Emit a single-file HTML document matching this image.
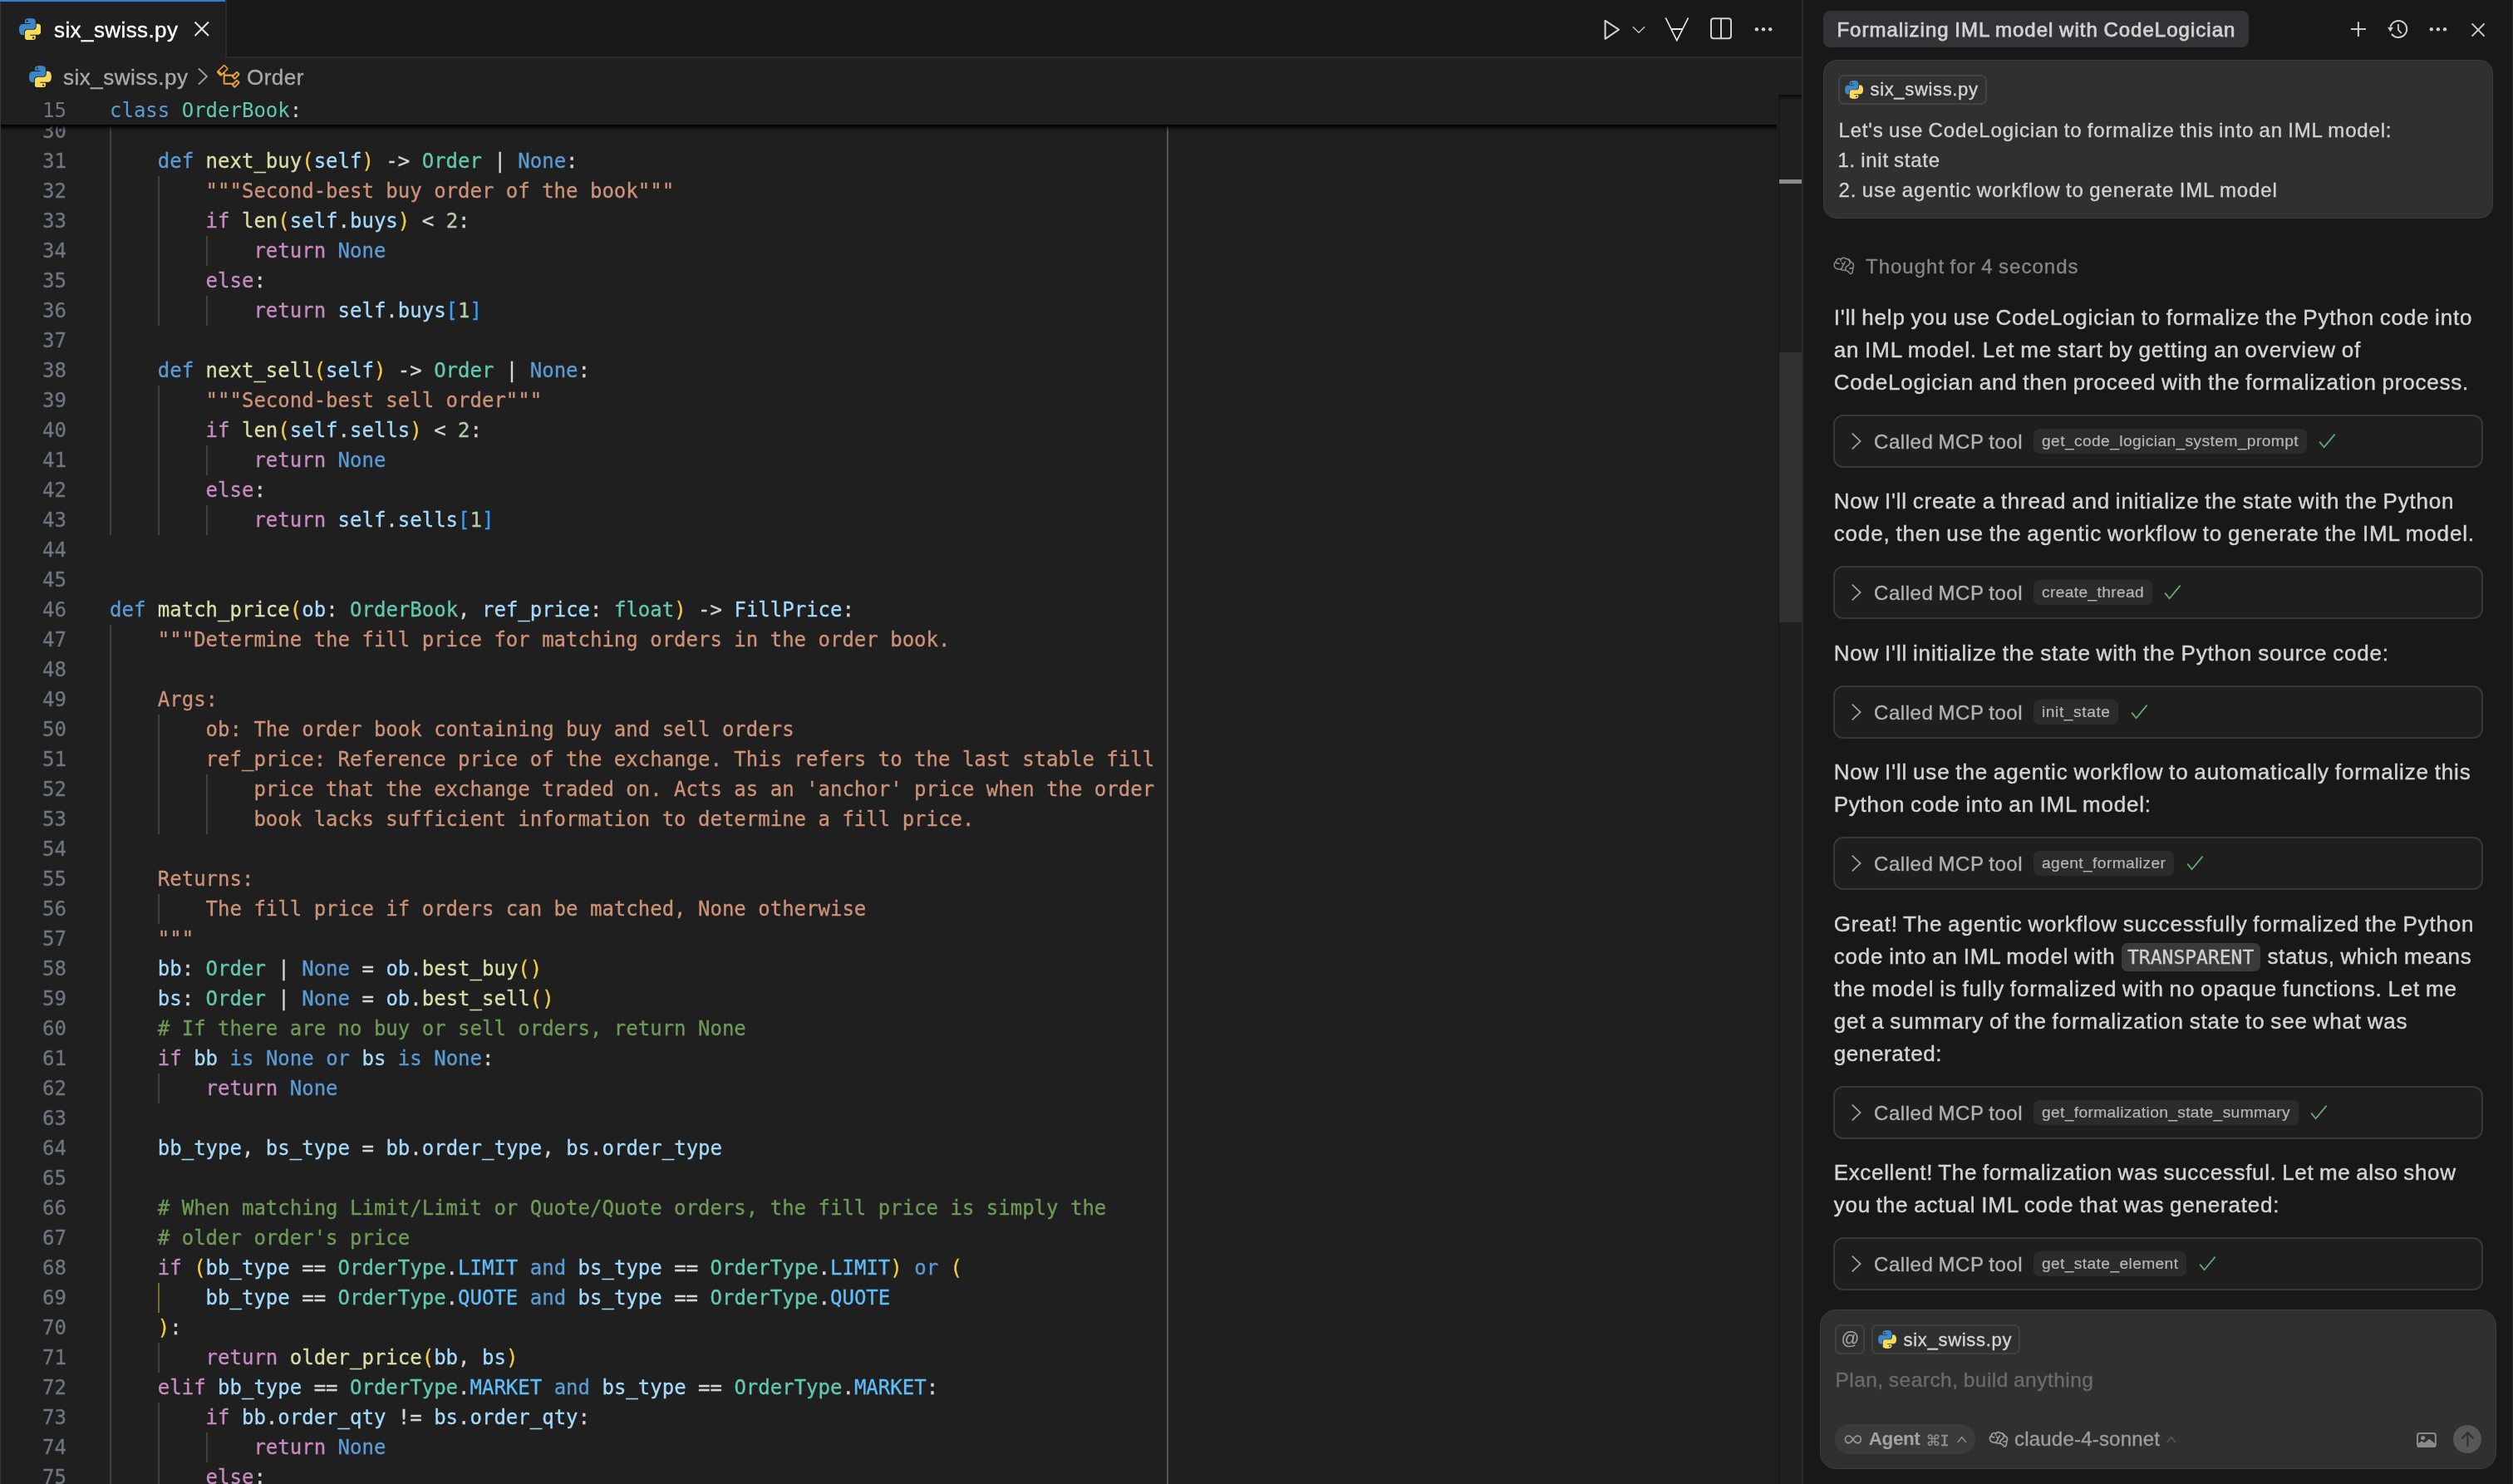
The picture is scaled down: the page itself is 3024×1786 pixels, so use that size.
<!DOCTYPE html><html><head><meta charset="utf-8"><title>six_swiss.py</title><style>
*{box-sizing:border-box;margin:0;padding:0}
html{background:#1f1f1f}
body{width:3024px;height:1786px;overflow:hidden;background:#1f1f1f;position:relative;font-family:'Liberation Sans',sans-serif;color:#ccc;-webkit-font-smoothing:antialiased}
.abs,.py,svg.ic{position:absolute}
.t{position:absolute;white-space:pre;line-height:1;-webkit-text-stroke:0.35px}
#root{position:absolute;left:0;top:0;width:3024px;height:1786px;will-change:transform;transform:translateZ(0)}
#tabbar{position:absolute;left:0;top:0;width:2168px;height:70px;background:#181818;border-bottom:2px solid #2b2b2b}
#tab{position:absolute;left:0;top:0;width:273px;height:70px;background:#1f1f1f;border-right:2px solid #2b2b2b}
#tabtop{position:absolute;left:0;top:0;width:271px;height:2px;background:#3579cd}
#leftedge{position:absolute;left:0;top:2px;width:1px;height:1784px;background:#363636;z-index:6}
#editor{position:absolute;left:0;top:114px;width:2140px;height:1672px;overflow:hidden;font-family:'DejaVu Sans Mono','Liberation Mono',monospace;font-size:24px;line-height:36px;color:#d4d4d4;-webkit-text-stroke:0.3px}
.ln{position:absolute;left:0;width:2140px;height:36px;white-space:pre}
.ln .no{position:absolute;left:0;width:80px;text-align:right;color:#6e7681}
.ln .cd{position:absolute;left:132px;top:0.6px}
.ln .no{top:0.6px}
.g{position:absolute;top:1px;width:2px;height:36px;background:#404040}
.ga{background:#7c692c}
.k{color:#5a9cd6}.c{color:#c78cc2}.f{color:#dcdcaa}.v{color:#a4dafc}.ty{color:#62c9b1}
.s{color:#cd9379}.n{color:#b5cea8}.m{color:#6e9a58}.e{color:#5fbef9}.b1{color:#f5cb45}.b3{color:#3a9df8}
#sticky{position:absolute;left:0;top:114px;width:2140px;height:36px;background:#1f1f1f;font-family:'DejaVu Sans Mono','Liberation Mono',monospace;font-size:24px;line-height:36px;color:#d4d4d4;z-index:3}
#stsh{position:absolute;left:0;top:150px;width:2138px;height:8px;background:linear-gradient(#000 0,rgba(0,0,0,.75) 30%,rgba(0,0,0,.25) 65%,rgba(0,0,0,0) 100%);z-index:3}
#ruler{position:absolute;left:1404px;top:150px;width:2px;height:1636px;background:#545454}
#scroll{position:absolute;left:2140px;top:114px;width:28px;height:1672px;background:#1f1f1f;border-left:1px solid #151515;z-index:4}
#scroll .sh{position:absolute;left:0;top:0;width:27px;height:7px;background:linear-gradient(#0a0a0a,rgba(31,31,31,0))}
#scroll .sl{position:absolute;left:0;top:310px;width:27px;height:325px;background:#313131}
#scroll .mk{position:absolute;left:0;top:102px;width:27px;height:5px;background:#8c8c8c}
#sep{position:absolute;left:2168px;top:0;width:2px;height:1786px;background:#2b2b2b;z-index:5}
#redge{position:absolute;left:3023px;top:0;width:1px;height:1786px;background:#2a2a2a}
#chat{position:absolute;left:2170px;top:0;width:854px;height:1786px;background:#181818;overflow:hidden}
</style></head><body><div id="root">
<div id="editor" style="top:0;height:1786px"><div class="ln" style="top:139px"><span class="no">30</span><i class="g" style="left:132px"></i><span class="cd"></span></div>
<div class="ln" style="top:175px"><span class="no">31</span><i class="g" style="left:132px"></i><span class="cd">    <span class="k">def</span> <span class="f">next_buy</span><span class="b1">(</span><span class="v">self</span><span class="b1">)</span> -&gt; <span class="ty">Order</span> | <span class="k">None</span>:</span></div>
<div class="ln" style="top:211px"><span class="no">32</span><i class="g" style="left:132px"></i><i class="g" style="left:190px"></i><span class="cd">        <span class="s">"""Second-best buy order of the book"""</span></span></div>
<div class="ln" style="top:247px"><span class="no">33</span><i class="g" style="left:132px"></i><i class="g" style="left:190px"></i><span class="cd">        <span class="c">if</span> <span class="f">len</span><span class="b1">(</span><span class="v">self</span>.<span class="v">buys</span><span class="b1">)</span> &lt; <span class="n">2</span>:</span></div>
<div class="ln" style="top:283px"><span class="no">34</span><i class="g" style="left:132px"></i><i class="g" style="left:190px"></i><i class="g" style="left:248px"></i><span class="cd">            <span class="c">return</span> <span class="k">None</span></span></div>
<div class="ln" style="top:319px"><span class="no">35</span><i class="g" style="left:132px"></i><i class="g" style="left:190px"></i><span class="cd">        <span class="c">else</span>:</span></div>
<div class="ln" style="top:355px"><span class="no">36</span><i class="g" style="left:132px"></i><i class="g" style="left:190px"></i><i class="g" style="left:248px"></i><span class="cd">            <span class="c">return</span> <span class="v">self</span>.<span class="v">buys</span><span class="b3">[</span><span class="n">1</span><span class="b3">]</span></span></div>
<div class="ln" style="top:391px"><span class="no">37</span><i class="g" style="left:132px"></i><span class="cd"></span></div>
<div class="ln" style="top:427px"><span class="no">38</span><i class="g" style="left:132px"></i><span class="cd">    <span class="k">def</span> <span class="f">next_sell</span><span class="b1">(</span><span class="v">self</span><span class="b1">)</span> -&gt; <span class="ty">Order</span> | <span class="k">None</span>:</span></div>
<div class="ln" style="top:463px"><span class="no">39</span><i class="g" style="left:132px"></i><i class="g" style="left:190px"></i><span class="cd">        <span class="s">"""Second-best sell order"""</span></span></div>
<div class="ln" style="top:499px"><span class="no">40</span><i class="g" style="left:132px"></i><i class="g" style="left:190px"></i><span class="cd">        <span class="c">if</span> <span class="f">len</span><span class="b1">(</span><span class="v">self</span>.<span class="v">sells</span><span class="b1">)</span> &lt; <span class="n">2</span>:</span></div>
<div class="ln" style="top:535px"><span class="no">41</span><i class="g" style="left:132px"></i><i class="g" style="left:190px"></i><i class="g" style="left:248px"></i><span class="cd">            <span class="c">return</span> <span class="k">None</span></span></div>
<div class="ln" style="top:571px"><span class="no">42</span><i class="g" style="left:132px"></i><i class="g" style="left:190px"></i><span class="cd">        <span class="c">else</span>:</span></div>
<div class="ln" style="top:607px"><span class="no">43</span><i class="g" style="left:132px"></i><i class="g" style="left:190px"></i><i class="g" style="left:248px"></i><span class="cd">            <span class="c">return</span> <span class="v">self</span>.<span class="v">sells</span><span class="b3">[</span><span class="n">1</span><span class="b3">]</span></span></div>
<div class="ln" style="top:643px"><span class="no">44</span><span class="cd"></span></div>
<div class="ln" style="top:679px"><span class="no">45</span><span class="cd"></span></div>
<div class="ln" style="top:715px"><span class="no">46</span><span class="cd"><span class="k">def</span> <span class="f">match_price</span><span class="b1">(</span><span class="v">ob</span>: <span class="ty">OrderBook</span>, <span class="v">ref_price</span>: <span class="ty">float</span><span class="b1">)</span> -&gt; <span class="v">FillPrice</span>:</span></div>
<div class="ln" style="top:751px"><span class="no">47</span><i class="g" style="left:132px"></i><span class="cd">    <span class="s">"""Determine the fill price for matching orders in the order book.</span></span></div>
<div class="ln" style="top:787px"><span class="no">48</span><i class="g" style="left:132px"></i><span class="cd"></span></div>
<div class="ln" style="top:823px"><span class="no">49</span><i class="g" style="left:132px"></i><span class="cd">    <span class="s">Args:</span></span></div>
<div class="ln" style="top:859px"><span class="no">50</span><i class="g" style="left:132px"></i><i class="g" style="left:190px"></i><span class="cd">        <span class="s">ob: The order book containing buy and sell orders</span></span></div>
<div class="ln" style="top:895px"><span class="no">51</span><i class="g" style="left:132px"></i><i class="g" style="left:190px"></i><span class="cd">        <span class="s">ref_price: Reference price of the exchange. This refers to the last stable fill</span></span></div>
<div class="ln" style="top:931px"><span class="no">52</span><i class="g" style="left:132px"></i><i class="g" style="left:190px"></i><i class="g" style="left:248px"></i><span class="cd">            <span class="s">price that the exchange traded on. Acts as an 'anchor' price when the order</span></span></div>
<div class="ln" style="top:967px"><span class="no">53</span><i class="g" style="left:132px"></i><i class="g" style="left:190px"></i><i class="g" style="left:248px"></i><span class="cd">            <span class="s">book lacks sufficient information to determine a fill price.</span></span></div>
<div class="ln" style="top:1003px"><span class="no">54</span><i class="g" style="left:132px"></i><span class="cd"></span></div>
<div class="ln" style="top:1039px"><span class="no">55</span><i class="g" style="left:132px"></i><span class="cd">    <span class="s">Returns:</span></span></div>
<div class="ln" style="top:1075px"><span class="no">56</span><i class="g" style="left:132px"></i><i class="g" style="left:190px"></i><span class="cd">        <span class="s">The fill price if orders can be matched, None otherwise</span></span></div>
<div class="ln" style="top:1111px"><span class="no">57</span><i class="g" style="left:132px"></i><span class="cd">    <span class="s">"""</span></span></div>
<div class="ln" style="top:1147px"><span class="no">58</span><i class="g" style="left:132px"></i><span class="cd">    <span class="v">bb</span>: <span class="ty">Order</span> | <span class="k">None</span> = <span class="v">ob</span>.<span class="f">best_buy</span><span class="b1">()</span></span></div>
<div class="ln" style="top:1183px"><span class="no">59</span><i class="g" style="left:132px"></i><span class="cd">    <span class="v">bs</span>: <span class="ty">Order</span> | <span class="k">None</span> = <span class="v">ob</span>.<span class="f">best_sell</span><span class="b1">()</span></span></div>
<div class="ln" style="top:1219px"><span class="no">60</span><i class="g" style="left:132px"></i><span class="cd">    <span class="m"># If there are no buy or sell orders, return None</span></span></div>
<div class="ln" style="top:1255px"><span class="no">61</span><i class="g" style="left:132px"></i><span class="cd">    <span class="c">if</span> <span class="v">bb</span> <span class="k">is</span> <span class="k">None</span> <span class="k">or</span> <span class="v">bs</span> <span class="k">is</span> <span class="k">None</span>:</span></div>
<div class="ln" style="top:1291px"><span class="no">62</span><i class="g" style="left:132px"></i><i class="g" style="left:190px"></i><span class="cd">        <span class="c">return</span> <span class="k">None</span></span></div>
<div class="ln" style="top:1327px"><span class="no">63</span><i class="g" style="left:132px"></i><span class="cd"></span></div>
<div class="ln" style="top:1363px"><span class="no">64</span><i class="g" style="left:132px"></i><span class="cd">    <span class="v">bb_type</span>, <span class="v">bs_type</span> = <span class="v">bb</span>.<span class="v">order_type</span>, <span class="v">bs</span>.<span class="v">order_type</span></span></div>
<div class="ln" style="top:1399px"><span class="no">65</span><i class="g" style="left:132px"></i><span class="cd"></span></div>
<div class="ln" style="top:1435px"><span class="no">66</span><i class="g" style="left:132px"></i><span class="cd">    <span class="m"># When matching Limit/Limit or Quote/Quote orders, the fill price is simply the</span></span></div>
<div class="ln" style="top:1471px"><span class="no">67</span><i class="g" style="left:132px"></i><span class="cd">    <span class="m"># older order's price</span></span></div>
<div class="ln" style="top:1507px"><span class="no">68</span><i class="g" style="left:132px"></i><span class="cd">    <span class="c">if</span> <span class="b1">(</span><span class="v">bb_type</span> == <span class="ty">OrderType</span>.<span class="e">LIMIT</span> <span class="k">and</span> <span class="v">bs_type</span> == <span class="ty">OrderType</span>.<span class="e">LIMIT</span><span class="b1">)</span> <span class="k">or</span> <span class="b1">(</span></span></div>
<div class="ln" style="top:1543px"><span class="no">69</span><i class="g" style="left:132px"></i><i class="g ga" style="left:190px"></i><span class="cd">        <span class="v">bb_type</span> == <span class="ty">OrderType</span>.<span class="e">QUOTE</span> <span class="k">and</span> <span class="v">bs_type</span> == <span class="ty">OrderType</span>.<span class="e">QUOTE</span></span></div>
<div class="ln" style="top:1579px"><span class="no">70</span><i class="g" style="left:132px"></i><span class="cd">    <span class="b1">)</span>:</span></div>
<div class="ln" style="top:1615px"><span class="no">71</span><i class="g" style="left:132px"></i><i class="g" style="left:190px"></i><span class="cd">        <span class="c">return</span> <span class="f">older_price</span><span class="b1">(</span><span class="v">bb</span>, <span class="v">bs</span><span class="b1">)</span></span></div>
<div class="ln" style="top:1651px"><span class="no">72</span><i class="g" style="left:132px"></i><span class="cd">    <span class="c">elif</span> <span class="v">bb_type</span> == <span class="ty">OrderType</span>.<span class="e">MARKET</span> <span class="k">and</span> <span class="v">bs_type</span> == <span class="ty">OrderType</span>.<span class="e">MARKET</span>:</span></div>
<div class="ln" style="top:1687px"><span class="no">73</span><i class="g" style="left:132px"></i><i class="g" style="left:190px"></i><span class="cd">        <span class="c">if</span> <span class="v">bb</span>.<span class="v">order_qty</span> != <span class="v">bs</span>.<span class="v">order_qty</span>:</span></div>
<div class="ln" style="top:1723px"><span class="no">74</span><i class="g" style="left:132px"></i><i class="g" style="left:190px"></i><i class="g" style="left:248px"></i><span class="cd">            <span class="c">return</span> <span class="k">None</span></span></div>
<div class="ln" style="top:1759px"><span class="no">75</span><i class="g" style="left:132px"></i><i class="g" style="left:190px"></i><span class="cd">        <span class="c">else</span>:</span></div></div>
<div id="ruler"></div>
<div id="tabbar"></div><div id="tab"></div><div id="tabtop"></div>
<svg class="py" style="left:22.7px;top:21.6px;width:26.8px;height:26.8px" viewBox="2 2 28 28"><path d="M15.885 2.1c-7.1 0-6.651 3.07-6.651 3.07v3.19h6.752v1H6.545S2 8.8 2 16.005s4.013 6.912 4.013 6.912H8.33v-3.361s-.13-3.94 3.9-3.94h6.71s3.78.06 3.78-3.65V5.8s.57-3.7-6.835-3.7zm-3.73 2.14a1.22 1.22 0 1 1-1.22 1.22 1.22 1.22 0 0 1 1.22-1.22z" fill="#3b86c8"/><path d="M16.085 29.91c7.1 0 6.651-3.08 6.651-3.08v-3.18h-6.751v-1h9.47S30 23.158 30 15.995s-4.013-6.912-4.013-6.912H23.64v3.36s.13 3.94-3.9 3.94h-6.71s-3.78-.06-3.78 3.65v6.17s-.57 3.707 6.835 3.707zm3.73-2.14a1.22 1.22 0 1 1 1.22-1.22 1.22 1.22 0 0 1-1.22 1.22z" fill="#f8da5b"/></svg>
<div class="t" style="left:65px;top:23px;font-size:26px;color:#fff;letter-spacing:0.411px">six_swiss.py</div>
<svg class="ic" style="left:232px;top:24.2px" width="22" height="22" viewBox="0 0 22 22"><path d="M2.5 2.5L19 19M19 2.5L2.5 19" stroke="#e6e6e6" stroke-width="2" fill="none"/></svg>
<svg class="py" style="left:34.7px;top:78.5px;width:26.9px;height:26.9px" viewBox="2 2 28 28"><path d="M15.885 2.1c-7.1 0-6.651 3.07-6.651 3.07v3.19h6.752v1H6.545S2 8.8 2 16.005s4.013 6.912 4.013 6.912H8.33v-3.361s-.13-3.94 3.9-3.94h6.71s3.78.06 3.78-3.65V5.8s.57-3.7-6.835-3.7zm-3.73 2.14a1.22 1.22 0 1 1-1.22 1.22 1.22 1.22 0 0 1 1.22-1.22z" fill="#3b86c8"/><path d="M16.085 29.91c7.1 0 6.651-3.08 6.651-3.08v-3.18h-6.751v-1h9.47S30 23.158 30 15.995s-4.013-6.912-4.013-6.912H23.64v3.36s.13 3.94-3.9 3.94h-6.71s-3.78-.06-3.78 3.65v6.17s-.57 3.707 6.835 3.707zm3.73-2.14a1.22 1.22 0 1 1 1.22-1.22 1.22 1.22 0 0 1-1.22 1.22z" fill="#f8da5b"/></svg>
<div class="t" style="left:76px;top:79.6px;font-size:26px;color:#a9a9a9;letter-spacing:0.501px">six_swiss.py</div>
<svg class="ic" style="left:236px;top:80px" width="16" height="24" viewBox="0 0 16 24"><path d="M3 2.5L13 12L3 21.5" stroke="#a0a0a0" stroke-width="1.8" fill="none"/></svg>
<svg class="ic" style="left:258.9px;top:75.7px" width="32" height="32" viewBox="0 0 16 16"><path fill="#eea33c" d="M11.34 9.71h.71l2.67-2.67v-.71L13.38 5h-.7l-1.82 1.81h-5V5.56l1.86-1.85V3l-2-2H5L1 5v.71l2 2h.71l1.14-1.15v5.79l.5.5H10v.52l1.33 1.34h.71l2.67-2.67v-.71L13.37 10h-.7l-1.86 1.85h-5v-4H10v.48l1.34 1.38zm1.69-3.65l.63.63-2 2-.63-.63 2-2zm-7.6-1.2l-1.4 1.43-1.62-1.61L5.38 1.7l1.62 1.62-1.57 1.54zm7.6 6.2l.63.63-2 2-.63-.63 2-2z"/></svg>
<div class="t" style="left:297px;top:79.6px;font-size:26px;color:#a9a9a9;letter-spacing:0.458px">Order</div>
<svg class="ic" style="left:1920px;top:14px" width="230" height="44" viewBox="1920 14 230 44" fill="none" stroke="#d0d0d0"><path d="M1931.6 24.9V46.8L1948 35.7Z" stroke-width="2.1" stroke-linejoin="round"/><path d="M1964.9 32.2L1972 39.2L1979.1 32.2" stroke-width="1.5" stroke="#c0c0c0"/><path d="M2004.3 21.3L2017.8 48.6L2031.6 21.3" stroke-width="1.6" stroke="#e8e8e8"/><path d="M2011.5 35H2024.2" stroke-width="2" stroke="#e8e8e8"/><rect x="2059" y="22.3" width="24" height="24" rx="3" stroke-width="2"/><path d="M2071 22.3V46.3" stroke-width="2"/><g fill="#d0d0d0" stroke="none"><circle cx="2113.9" cy="35.3" r="2.2"/><circle cx="2122" cy="35.3" r="2.2"/><circle cx="2130.2" cy="35.3" r="2.2"/></g></svg>
<div id="sticky"><div class="ln sc" style="top:0"><span class="no">15</span><span class="cd"><span class="k">class</span> <span class="ty">OrderBook</span>:</span></div></div>
<div id="stsh"></div>
<div id="scroll"><div class="sh"></div><div class="mk"></div><div class="sl"></div></div>
<div id="leftedge"></div>
<div id="sep"></div>
<div id="chat"></div><div id="redge"></div>
<div class="abs" style="left:2194px;top:13px;width:512px;height:44px;background:#333237;border-radius:8px"></div>
<div class="t" style="left:2210.4px;top:23.7px;font-size:24px;color:#d2d2d2;font-weight:400;letter-spacing:1.020px;word-spacing:-1.1px;-webkit-text-stroke:0.75px;">Formalizing IML model with CodeLogician</div>
<svg class="ic" style="left:2820px;top:14px" width="190" height="44" viewBox="2820 14 190 44" fill="none" stroke="#cdcdcd" stroke-width="2"><path d="M2828.9 35.1H2847M2837.9 26.2V44.1"/><path d="M2876.5 32.5A10 10 0 1 1 2878.0 40.8" /><path d="M2873 32.7L2879.8 33L2876.4 38.4Z" fill="#cdcdcd" stroke="none"/><path d="M2886 29V36.2L2889.8 40.2" stroke-width="1.8"/><g fill="#cdcdcd" stroke="none"><circle cx="2925.8" cy="35.2" r="2.2"/><circle cx="2933.9" cy="35.2" r="2.2"/><circle cx="2942" cy="35.2" r="2.2"/></g><path d="M2974.6 28.4L2989.6 43.6M2989.6 28.4L2974.6 43.6"/></svg>
<div class="abs" style="left:2194px;top:72px;width:806px;height:191px;background:#303030;border:1px solid #3c3c3c;border-radius:16px"></div>
<div class="abs" style="left:2212px;top:90px;width:179px;height:36px;border:2px solid #434343;border-radius:7px"></div>
<svg class="py" style="left:2219.5px;top:97px;width:22px;height:22px" viewBox="2 2 28 28"><path d="M15.885 2.1c-7.1 0-6.651 3.07-6.651 3.07v3.19h6.752v1H6.545S2 8.8 2 16.005s4.013 6.912 4.013 6.912H8.33v-3.361s-.13-3.94 3.9-3.94h6.71s3.78.06 3.78-3.65V5.8s.57-3.7-6.835-3.7zm-3.73 2.14a1.22 1.22 0 1 1-1.22 1.22 1.22 1.22 0 0 1 1.22-1.22z" fill="#3b86c8"/><path d="M16.085 29.91c7.1 0 6.651-3.08 6.651-3.08v-3.18h-6.751v-1h9.47S30 23.158 30 15.995s-4.013-6.912-4.013-6.912H23.64v3.36s.13 3.94-3.9 3.94h-6.71s-3.78-.06-3.78 3.65v6.17s-.57 3.707 6.835 3.707zm3.73-2.14a1.22 1.22 0 1 1 1.22-1.22 1.22 1.22 0 0 1-1.22 1.22z" fill="#f8da5b"/></svg>
<div class="t" style="left:2250.5px;top:97.4px;font-size:22px;color:#d4d4d4;font-weight:400;letter-spacing:0.659px;">six_swiss.py</div>
<div class="t" style="left:2212.5px;top:145.1px;font-size:24px;color:#d2d2d2;font-weight:400;letter-spacing:0.831px;word-spacing:-1.1px;">Let's use CodeLogician to formalize this into an IML model:</div>
<div class="t" style="left:2211.5px;top:180.7px;font-size:24px;color:#d2d2d2;font-weight:400;letter-spacing:0.719px;word-spacing:-1.1px;">1. init state</div>
<div class="t" style="left:2212.5px;top:216.7px;font-size:24px;color:#d2d2d2;font-weight:400;letter-spacing:0.903px;word-spacing:-1.1px;">2. use agentic workflow to generate IML model</div>
<svg class="ic" style="left:2200px;top:304px" width="40.00" height="32.00" viewBox="0 0 1855 1484" fill="none" stroke="#8a8a8a" stroke-width="72" stroke-linecap="round" stroke-linejoin="round"><path d="M700 470C699 456 713 408 695 385C677 362 626 333 590 335C554 337 507 368 480 395C453 422 451 468 430 500C409 532 371 553 355 590C339 627 328 677 335 720C342 763 364 817 395 850C426 883 476 906 520 920C564 934 613 922 660 932C707 942 752 968 800 978C848 988 904 983 950 992C996 1001 1042 1014 1075 1030C1108 1046 1129 1068 1150 1090C1171 1112 1181 1145 1200 1160C1219 1175 1240 1188 1262 1182C1284 1176 1317 1155 1335 1125C1353 1095 1362 1041 1368 1000C1374 959 1366 913 1372 880C1378 847 1396 833 1402 800C1408 767 1419 718 1410 680C1401 642 1375 597 1350 572C1325 547 1286 556 1262 532C1238 508 1232 458 1205 430C1178 402 1137 377 1100 362C1063 347 1018 352 985 340C952 328 928 300 900 292C872 284 847 283 820 292C793 301 761 330 740 345C719 360 702 378 695 385"/><path d="M440 560C453 566 493 586 520 595C547 604 587 609 600 612"/><path d="M940 505C932 523 909 582 890 615C871 648 840 669 825 700C810 731 813 769 800 800C787 831 763 864 745 885C727 906 699 918 690 925"/><path d="M755 588C763 593 789 610 805 620C821 630 844 641 852 645"/><path d="M1100 362C1115 380 1170 434 1188 470C1206 506 1219 542 1210 580C1201 618 1168 665 1135 700C1102 735 1039 760 1010 790C981 820 964 851 960 880C956 909 981 951 985 965"/><path d="M1180 880C1195 879 1239 877 1270 876C1301 875 1349 873 1365 872"/></svg>
<div class="t" style="left:2245px;top:308.7px;font-size:24px;color:#868686;font-weight:400;letter-spacing:0.998px;word-spacing:-1.1px;">Thought for 4 seconds</div>
<div class="t" style="left:2206.7px;top:369.0px;font-size:26px;color:#d4d4d4;font-weight:400;letter-spacing:0.780px;word-spacing:-1.2px;-webkit-text-stroke:0.42px;">I'll help you use CodeLogician to formalize the Python code into</div>
<div class="t" style="left:2206.7px;top:408.0px;font-size:26px;color:#d4d4d4;font-weight:400;letter-spacing:0.831px;word-spacing:-1.2px;-webkit-text-stroke:0.42px;">an IML model. Let me start by getting an overview of</div>
<div class="t" style="left:2206.7px;top:447.0px;font-size:26px;color:#d4d4d4;font-weight:400;letter-spacing:0.774px;word-spacing:-1.2px;-webkit-text-stroke:0.42px;">CodeLogician and then proceed with the formalization process.</div>
<div class="abs" style="left:2206px;top:499px;width:782px;height:64px;background:#1e1e1e;border:2px solid #383838;border-radius:12px"></div>
<svg class="ic" style="left:2226px;top:520px" width="16" height="22" viewBox="0 0 16 22"><path d="M2.8 1.6L12.6 11L2.8 20.4" stroke="#a8a8a8" stroke-width="1.7" fill="none"/></svg>
<div class="t" style="left:2255px;top:519.7px;font-size:24px;color:#b2b2b2;font-weight:400;letter-spacing:0.558px;word-spacing:-1.1px;">Called MCP tool</div>
<div class="abs" style="left:2447px;top:516px;width:328.5999999999999px;height:30px;background:#2a2b2d;border-radius:7px"></div>
<div class="t" style="left:2457px;top:520.5px;font-size:19.2px;color:#b6b6b6;font-weight:400;letter-spacing:0.402px;-webkit-text-stroke:0.2px;">get_code_logician_system_prompt</div>
<svg class="ic" style="left:2790.1px;top:521px" width="22" height="20" viewBox="0 0 22 20"><path d="M1.2 10.6L6.6 17.2L19.6 1.6" stroke="#6dab78" stroke-width="1.7" fill="none"/></svg>
<div class="t" style="left:2206.7px;top:590.0px;font-size:26px;color:#d4d4d4;font-weight:400;letter-spacing:0.808px;word-spacing:-1.2px;-webkit-text-stroke:0.42px;">Now I'll create a thread and initialize the state with the Python</div>
<div class="t" style="left:2206.7px;top:629.0px;font-size:26px;color:#d4d4d4;font-weight:400;letter-spacing:0.853px;word-spacing:-1.2px;-webkit-text-stroke:0.42px;">code, then use the agentic workflow to generate the IML model.</div>
<div class="abs" style="left:2206px;top:681px;width:782px;height:64px;background:#1e1e1e;border:2px solid #383838;border-radius:12px"></div>
<svg class="ic" style="left:2226px;top:702px" width="16" height="22" viewBox="0 0 16 22"><path d="M2.8 1.6L12.6 11L2.8 20.4" stroke="#a8a8a8" stroke-width="1.7" fill="none"/></svg>
<div class="t" style="left:2255px;top:701.7px;font-size:24px;color:#b2b2b2;font-weight:400;letter-spacing:0.558px;word-spacing:-1.1px;">Called MCP tool</div>
<div class="abs" style="left:2447px;top:698px;width:142.69999999999982px;height:30px;background:#2a2b2d;border-radius:7px"></div>
<div class="t" style="left:2457px;top:702.5px;font-size:19.2px;color:#b6b6b6;font-weight:400;letter-spacing:0.358px;-webkit-text-stroke:0.2px;">create_thread</div>
<svg class="ic" style="left:2604.2px;top:703px" width="22" height="20" viewBox="0 0 22 20"><path d="M1.2 10.6L6.6 17.2L19.6 1.6" stroke="#6dab78" stroke-width="1.7" fill="none"/></svg>
<div class="t" style="left:2206.7px;top:773.3px;font-size:26px;color:#d4d4d4;font-weight:400;letter-spacing:0.833px;word-spacing:-1.2px;-webkit-text-stroke:0.42px;">Now I'll initialize the state with the Python source code:</div>
<div class="abs" style="left:2206px;top:825px;width:782px;height:64px;background:#1e1e1e;border:2px solid #383838;border-radius:12px"></div>
<svg class="ic" style="left:2226px;top:846px" width="16" height="22" viewBox="0 0 16 22"><path d="M2.8 1.6L12.6 11L2.8 20.4" stroke="#a8a8a8" stroke-width="1.7" fill="none"/></svg>
<div class="t" style="left:2255px;top:845.7px;font-size:24px;color:#b2b2b2;font-weight:400;letter-spacing:0.558px;word-spacing:-1.1px;">Called MCP tool</div>
<div class="abs" style="left:2447px;top:842px;width:102px;height:30px;background:#2a2b2d;border-radius:7px"></div>
<div class="t" style="left:2457px;top:846.5px;font-size:19.2px;color:#b6b6b6;font-weight:400;letter-spacing:0.578px;-webkit-text-stroke:0.2px;">init_state</div>
<svg class="ic" style="left:2563.5px;top:847px" width="22" height="20" viewBox="0 0 22 20"><path d="M1.2 10.6L6.6 17.2L19.6 1.6" stroke="#6dab78" stroke-width="1.7" fill="none"/></svg>
<div class="t" style="left:2206.7px;top:916.0px;font-size:26px;color:#d4d4d4;font-weight:400;letter-spacing:0.838px;word-spacing:-1.2px;-webkit-text-stroke:0.42px;">Now I'll use the agentic workflow to automatically formalize this</div>
<div class="t" style="left:2206.7px;top:955.0px;font-size:26px;color:#d4d4d4;font-weight:400;letter-spacing:0.779px;word-spacing:-1.2px;-webkit-text-stroke:0.42px;">Python code into an IML model:</div>
<div class="abs" style="left:2206px;top:1007px;width:782px;height:64px;background:#1e1e1e;border:2px solid #383838;border-radius:12px"></div>
<svg class="ic" style="left:2226px;top:1028px" width="16" height="22" viewBox="0 0 16 22"><path d="M2.8 1.6L12.6 11L2.8 20.4" stroke="#a8a8a8" stroke-width="1.7" fill="none"/></svg>
<div class="t" style="left:2255px;top:1027.7px;font-size:24px;color:#b2b2b2;font-weight:400;letter-spacing:0.558px;word-spacing:-1.1px;">Called MCP tool</div>
<div class="abs" style="left:2447px;top:1024px;width:169px;height:30px;background:#2a2b2d;border-radius:7px"></div>
<div class="t" style="left:2457px;top:1028.5px;font-size:19.2px;color:#b6b6b6;font-weight:400;letter-spacing:0.405px;-webkit-text-stroke:0.2px;">agent_formalizer</div>
<svg class="ic" style="left:2630.5px;top:1029px" width="22" height="20" viewBox="0 0 22 20"><path d="M1.2 10.6L6.6 17.2L19.6 1.6" stroke="#6dab78" stroke-width="1.7" fill="none"/></svg>
<div class="t" style="left:2206.7px;top:1099.0px;font-size:26px;color:#d4d4d4;font-weight:400;letter-spacing:0.800px;word-spacing:-1.2px;-webkit-text-stroke:0.42px;">Great! The agentic workflow successfully formalized the Python</div>
<div class="t" style="left:2206.7px;top:1138.0px;font-size:26px;color:#d4d4d4;font-weight:400;letter-spacing:0.821px;word-spacing:-1.2px;-webkit-text-stroke:0.42px;">code into an IML model with</div>
<div class="abs" style="left:2553px;top:1135px;width:167px;height:33.5px;background:#3a3a3a;border-radius:7px"></div>
<div class="t" style="left:2560px;top:1140.5px;font-family:'DejaVu Sans Mono','Liberation Mono',monospace;font-size:23px;color:#d0d0d0;-webkit-text-stroke:0.3px">TRANSPARENT</div>
<div class="t" style="left:2728.4px;top:1138.0px;font-size:26px;color:#d4d4d4;font-weight:400;letter-spacing:0.675px;word-spacing:-1.2px;-webkit-text-stroke:0.42px;">status, which means</div>
<div class="t" style="left:2206.7px;top:1177.0px;font-size:26px;color:#d4d4d4;font-weight:400;letter-spacing:0.847px;word-spacing:-1.2px;-webkit-text-stroke:0.42px;">the model is fully formalized with no opaque functions. Let me</div>
<div class="t" style="left:2206.7px;top:1216.0px;font-size:26px;color:#d4d4d4;font-weight:400;letter-spacing:0.833px;word-spacing:-1.2px;-webkit-text-stroke:0.42px;">get a summary of the formalization state to see what was</div>
<div class="t" style="left:2206.7px;top:1255.0px;font-size:26px;color:#d4d4d4;font-weight:400;letter-spacing:0.608px;-webkit-text-stroke:0.42px;">generated:</div>
<div class="abs" style="left:2206px;top:1307px;width:782px;height:64px;background:#1e1e1e;border:2px solid #383838;border-radius:12px"></div>
<svg class="ic" style="left:2226px;top:1328px" width="16" height="22" viewBox="0 0 16 22"><path d="M2.8 1.6L12.6 11L2.8 20.4" stroke="#a8a8a8" stroke-width="1.7" fill="none"/></svg>
<div class="t" style="left:2255px;top:1327.7px;font-size:24px;color:#b2b2b2;font-weight:400;letter-spacing:0.558px;word-spacing:-1.1px;">Called MCP tool</div>
<div class="abs" style="left:2447px;top:1324px;width:318.6999999999998px;height:30px;background:#2a2b2d;border-radius:7px"></div>
<div class="t" style="left:2457px;top:1328.5px;font-size:19.2px;color:#b6b6b6;font-weight:400;letter-spacing:0.358px;-webkit-text-stroke:0.2px;">get_formalization_state_summary</div>
<svg class="ic" style="left:2780.2px;top:1329px" width="22" height="20" viewBox="0 0 22 20"><path d="M1.2 10.6L6.6 17.2L19.6 1.6" stroke="#6dab78" stroke-width="1.7" fill="none"/></svg>
<div class="t" style="left:2206.7px;top:1398.0px;font-size:26px;color:#d4d4d4;font-weight:400;letter-spacing:0.669px;word-spacing:-1.2px;-webkit-text-stroke:0.42px;">Excellent! The formalization was successful. Let me also show</div>
<div class="t" style="left:2206.7px;top:1437.0px;font-size:26px;color:#d4d4d4;font-weight:400;letter-spacing:0.800px;word-spacing:-1.2px;-webkit-text-stroke:0.42px;">you the actual IML code that was generated:</div>
<div class="abs" style="left:2206px;top:1489px;width:782px;height:64px;background:#1e1e1e;border:2px solid #383838;border-radius:12px"></div>
<svg class="ic" style="left:2226px;top:1510px" width="16" height="22" viewBox="0 0 16 22"><path d="M2.8 1.6L12.6 11L2.8 20.4" stroke="#a8a8a8" stroke-width="1.7" fill="none"/></svg>
<div class="t" style="left:2255px;top:1509.7px;font-size:24px;color:#b2b2b2;font-weight:400;letter-spacing:0.558px;word-spacing:-1.1px;">Called MCP tool</div>
<div class="abs" style="left:2447px;top:1506px;width:184px;height:30px;background:#2a2b2d;border-radius:7px"></div>
<div class="t" style="left:2457px;top:1510.5px;font-size:19.2px;color:#b6b6b6;font-weight:400;letter-spacing:0.382px;-webkit-text-stroke:0.2px;">get_state_element</div>
<svg class="ic" style="left:2645.5px;top:1511px" width="22" height="20" viewBox="0 0 22 20"><path d="M1.2 10.6L6.6 17.2L19.6 1.6" stroke="#6dab78" stroke-width="1.7" fill="none"/></svg>
<div class="abs" style="left:2190px;top:1576px;width:814px;height:192px;background:#303030;border:1px solid #3d3d3d;border-radius:19px"></div>
<div class="abs" style="left:2208px;top:1594px;width:36px;height:36px;border:2px solid #414141;border-radius:7px"></div>
<div class="t" style="left:2215.6px;top:1601.1px;font-size:21.5px;color:#a2a2a2;font-weight:400;-webkit-text-stroke:0.15px;">@</div>
<div class="abs" style="left:2252px;top:1594px;width:179px;height:36px;border:2px solid #414141;border-radius:7px"></div>
<svg class="py" style="left:2259.5px;top:1601px;width:22px;height:22px" viewBox="2 2 28 28"><path d="M15.885 2.1c-7.1 0-6.651 3.07-6.651 3.07v3.19h6.752v1H6.545S2 8.8 2 16.005s4.013 6.912 4.013 6.912H8.33v-3.361s-.13-3.94 3.9-3.94h6.71s3.78.06 3.78-3.65V5.8s.57-3.7-6.835-3.7zm-3.73 2.14a1.22 1.22 0 1 1-1.22 1.22 1.22 1.22 0 0 1 1.22-1.22z" fill="#3b86c8"/><path d="M16.085 29.91c7.1 0 6.651-3.08 6.651-3.08v-3.18h-6.751v-1h9.47S30 23.158 30 15.995s-4.013-6.912-4.013-6.912H23.64v3.36s.13 3.94-3.9 3.94h-6.71s-3.78-.06-3.78 3.65v6.17s-.57 3.707 6.835 3.707zm3.73-2.14a1.22 1.22 0 1 1 1.22-1.22 1.22 1.22 0 0 1-1.22 1.22z" fill="#f8da5b"/></svg>
<div class="t" style="left:2290.6px;top:1602.4px;font-size:22px;color:#d4d4d4;font-weight:400;letter-spacing:0.695px;">six_swiss.py</div>
<div class="t" style="left:2208.4px;top:1648.7px;font-size:24.5px;color:#6b6b6b;font-weight:400;letter-spacing:0.481px;word-spacing:-1.13px;">Plan, search, build anything</div>
<div class="abs" style="left:2208px;top:1714px;width:168.5px;height:36px;background:#3a3b3b;border-radius:18px"></div>
<svg class="ic" style="left:2218.6px;top:1725px" width="21.8" height="14.6" viewBox="0 0 24 16"><path d="M12 8C10 5 8.2 3.2 6 3.2C3.4 3.2 1.6 5.4 1.6 8C1.6 10.6 3.4 12.8 6 12.8C8.2 12.8 10 11 12 8C14 5 15.8 3.2 18 3.2C20.6 3.2 22.4 5.4 22.4 8C22.4 10.6 20.6 12.8 18 12.8C15.8 12.8 14 11 12 8Z" fill="none" stroke="#9a9a9a" stroke-width="1.75"/></svg>
<div class="t" style="left:2248.8px;top:1721.4px;font-size:22.5px;color:#a2a2a2;font-weight:700;letter-spacing:-0.438px;-webkit-text-stroke:0;">Agent</div>
<div class="t" style="left:2317.5px;top:1720.5px;font-family:'DejaVu Sans Mono','Liberation Mono',monospace;font-size:25px;color:#8e8e8e;-webkit-text-stroke:0.3px"><span style="font-family:'DejaVu Sans',sans-serif;font-size:18px;position:relative;top:-1.5px">⌘</span><span style="font-size:18.5px;-webkit-text-stroke:0.6px;position:relative;top:-1.5px;left:-1px">I</span></div>
<svg class="ic" style="left:2353.5px;top:1726.5px" width="14" height="10" viewBox="0 0 14 10"><path d="M1.6 9.2L6.8 2.6L12 9.2" stroke="#9a9a9a" stroke-width="1.3" fill="none"/></svg>
<svg class="ic" style="left:2387.52px;top:1717.6299999999999px" width="36.00" height="28.80" viewBox="0 0 1855 1484" fill="none" stroke="#9c9c9c" stroke-width="88" stroke-linecap="round" stroke-linejoin="round"><path d="M700 470C699 456 713 408 695 385C677 362 626 333 590 335C554 337 507 368 480 395C453 422 451 468 430 500C409 532 371 553 355 590C339 627 328 677 335 720C342 763 364 817 395 850C426 883 476 906 520 920C564 934 613 922 660 932C707 942 752 968 800 978C848 988 904 983 950 992C996 1001 1042 1014 1075 1030C1108 1046 1129 1068 1150 1090C1171 1112 1181 1145 1200 1160C1219 1175 1240 1188 1262 1182C1284 1176 1317 1155 1335 1125C1353 1095 1362 1041 1368 1000C1374 959 1366 913 1372 880C1378 847 1396 833 1402 800C1408 767 1419 718 1410 680C1401 642 1375 597 1350 572C1325 547 1286 556 1262 532C1238 508 1232 458 1205 430C1178 402 1137 377 1100 362C1063 347 1018 352 985 340C952 328 928 300 900 292C872 284 847 283 820 292C793 301 761 330 740 345C719 360 702 378 695 385"/><path d="M440 560C453 566 493 586 520 595C547 604 587 609 600 612"/><path d="M940 505C932 523 909 582 890 615C871 648 840 669 825 700C810 731 813 769 800 800C787 831 763 864 745 885C727 906 699 918 690 925"/><path d="M755 588C763 593 789 610 805 620C821 630 844 641 852 645"/><path d="M1100 362C1115 380 1170 434 1188 470C1206 506 1219 542 1210 580C1201 618 1168 665 1135 700C1102 735 1039 760 1010 790C981 820 964 851 960 880C956 909 981 951 985 965"/><path d="M1180 880C1195 879 1239 877 1270 876C1301 875 1349 873 1365 872"/></svg>
<div class="t" style="left:2424px;top:1720.0px;font-size:24px;color:#9c9c9c;font-weight:400;letter-spacing:0.205px;">claude-4-sonnet</div>
<svg class="ic" style="left:2606px;top:1726.5px" width="14" height="10" viewBox="0 0 14 10"><path d="M1.6 9.2L6.8 2.6L12 9.2" stroke="#5e5e5e" stroke-width="1.3" fill="none"/></svg>
<svg class="ic" style="left:2907px;top:1723px" width="26" height="20" viewBox="0 0 26 20"><rect x="2" y="1.9" width="21.9" height="16.1" rx="2.6" fill="none" stroke="#8a8a8a" stroke-width="2"/><circle cx="8.6" cy="7.6" r="2.5" fill="#8a8a8a"/><path d="M2.6 14.2L7.2 11.2L10.4 13.6L16.2 8.8L23.4 14.6V17.4H2.6Z" fill="#8a8a8a"/></svg>
<div class="abs" style="left:2952px;top:1715px;width:34px;height:34px;background:#575757;border-radius:50%"></div>
<svg class="ic" style="left:2957.5px;top:1721px" width="22" height="22" viewBox="0 0 22 22"><path d="M11.4 19.8V3.4M4.4 10.2L11.4 3.2L18.4 10.2" stroke="#2f2f2f" stroke-width="2" fill="none"/></svg>
</div></body></html>
